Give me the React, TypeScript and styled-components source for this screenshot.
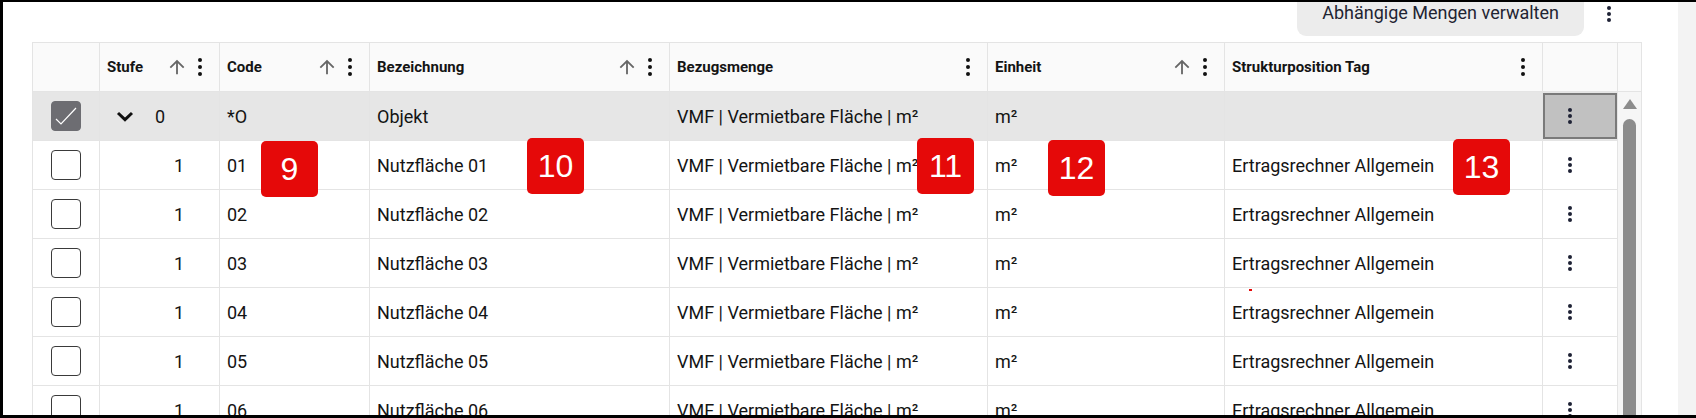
import React from "react";
import styled, { createGlobalStyle } from "styled-components";

const GlobalStyle = createGlobalStyle`
  html, body {
    margin: 0;
    padding: 0;
    background: #ffffff;
  }
  body {
    font-family: Roboto, "Liberation Sans", Arial, sans-serif;
    color: #141414;
  }
`;

// widths of the data columns incl. their right grid line
const GRID = "67px 120px 150px 300px 318px 237px 318px 75px";

type Column = { key: string; title: string; sortable?: boolean };

const COLUMNS: Column[] = [
  { key: "stufe", title: "Stufe", sortable: true },
  { key: "code", title: "Code", sortable: true },
  { key: "bezeichnung", title: "Bezeichnung", sortable: true },
  { key: "bezugsmenge", title: "Bezugsmenge" },
  { key: "einheit", title: "Einheit", sortable: true },
  { key: "tag", title: "Strukturposition Tag" },
];

type Row = {
  level: number;
  code: string;
  name: string;
  ref: string;
  unit: string;
  tag: string;
  expanded?: boolean;
  selected?: boolean;
};

const ROWS: Row[] = [
  {
    level: 0,
    code: "*O",
    name: "Objekt",
    ref: "VMF | Vermietbare Fläche | m²",
    unit: "m²",
    tag: "",
    expanded: true,
    selected: true,
  },
  ...[1, 2, 3, 4, 5, 6].map((i) => ({
    level: 1,
    code: `0${i}`,
    name: `Nutzfläche 0${i}`,
    ref: "VMF | Vermietbare Fläche | m²",
    unit: "m²",
    tag: "Ertragsrechner Allgemein",
  })),
];

const MARKERS = [
  { n: 9, x: 261, y: 141 },
  { n: 10, x: 527, y: 138 },
  { n: 11, x: 917, y: 138 },
  { n: 12, x: 1048, y: 140 },
  { n: 13, x: 1453, y: 139 },
];

const Frame = styled.div`
  position: relative;
  width: 1696px;
  height: 418px;
  box-sizing: border-box;
  border-top: 2px solid #000;
  border-left: 3px solid #000;
  border-bottom: 3px solid #000;
  display: flex;
  overflow: hidden;
  background: #fff;
`;

const Content = styled.div`
  width: 1675px;
  box-sizing: border-box;
  padding-left: 29px;
  display: flex;
  flex-direction: column;
  min-height: 0;
`;

const Gutter = styled.div`
  flex: 1;
  background: #f3f3f3;
`;

const Toolbar = styled.div`
  height: 40px;
  flex-shrink: 0;
  display: flex;
  justify-content: flex-end;
  align-items: flex-start;
  padding-right: 57px;
`;

const ToolbarButton = styled.button`
  height: 34px;
  margin-right: 13px;
  padding: 0 25px;
  border: none;
  border-radius: 0 0 9px 9px;
  background: #ececec;
  color: #1f2433;
  font-family: Roboto, "Liberation Sans", Arial, sans-serif;
  font-size: 18px;
  line-height: 21px;
  display: flex;
  align-items: flex-start;
  white-space: nowrap;
`;

const IconSlot = styled.span<{ $w: number; $h: number }>`
  width: ${({ $w }) => $w}px;
  height: ${({ $h }) => $h}px;
  display: flex;
  align-items: center;
  justify-content: center;
  flex-shrink: 0;
`;

const Table = styled.div`
  width: 1610px;
  flex: 1;
  min-height: 0;
  box-sizing: border-box;
  border: 1px solid #e4e4e4;
  border-bottom: none;
  display: flex;
  flex-direction: column;
  overflow: hidden;
`;

const HeaderRow = styled.div`
  display: grid;
  grid-template-columns: ${GRID} 1fr;
  height: 49px;
  flex-shrink: 0;
  box-sizing: border-box;
  border-bottom: 1px solid #e4e4e4;
  background: #fafafa;
`;

const HeaderCell = styled.div`
  display: flex;
  align-items: center;
  gap: 9px;
  padding: 0 16px 0 7px;
  border-right: 1px solid #e4e4e4;
  font-size: 15px;
  font-weight: 700;
  color: #141414;
  white-space: nowrap;
`;

const HeaderTitle = styled.span`
  flex: 1;
`;

const Body = styled.div`
  display: flex;
  flex: 1;
  min-height: 0;
`;

const Rows = styled.div`
  width: 1585px;
  display: flex;
  flex-direction: column;
`;

const BodyRow = styled.div<{ $selected?: boolean }>`
  display: grid;
  grid-template-columns: ${GRID};
  height: 49px;
  flex-shrink: 0;
  box-sizing: border-box;
  border-bottom: 1px solid #e4e4e4;
  background: ${({ $selected }) => ($selected ? "#e6e6e6" : "#ffffff")};
`;

const Cell = styled.div`
  display: flex;
  align-items: center;
  padding: 0 8px 0 7px;
  border-right: 1px solid #e4e4e4;
  font-size: 18px;
  color: #141414;
  white-space: nowrap;
  overflow: hidden;
`;

const CheckCell = styled(Cell)`
  justify-content: center;
  padding: 0;
`;

const Checkbox = styled.span<{ $checked?: boolean }>`
  width: 30px;
  height: 30px;
  box-sizing: border-box;
  border-radius: 4px;
  border: 1.5px solid ${({ $checked }) => ($checked ? "#6d6d72" : "#3a3a3a")};
  background: ${({ $checked }) => ($checked ? "#6d6d72" : "#ffffff")};
  display: flex;
  align-items: center;
  justify-content: center;
`;

const TreeCell = styled(Cell)<{ $level: number }>`
  padding-left: ${({ $level }) => 7 + $level * 19}px;
`;

const Toggle = styled.span`
  width: 48px;
  height: 20px;
  display: flex;
  align-items: center;
  padding-left: 9px;
  box-sizing: border-box;
  flex-shrink: 0;
`;

const ActionCell = styled.div`
  padding: 1px 0;
  border-right: 1px solid #e4e4e4;
`;

const ActionBox = styled.div<{ $active?: boolean }>`
  height: 100%;
  box-sizing: border-box;
  display: flex;
  align-items: center;
  padding-left: 22px;
  border: 2px solid ${({ $active }) => ($active ? "#7a7a7a" : "transparent")};
  background: ${({ $active }) => ($active ? "#c1c1c1" : "transparent")};
`;

const ScrollTrack = styled.div`
  flex: 1;
  background: #f6f6f6;
  display: flex;
  flex-direction: column;
  align-items: center;
`;

const ScrollArrow = styled.span`
  width: 0;
  height: 0;
  margin-top: 7px;
  border-left: 7.5px solid transparent;
  border-right: 7.5px solid transparent;
  border-bottom: 10px solid #8c8c8c;
`;

const ScrollThumb = styled.span`
  width: 13px;
  flex: 1;
  margin-top: 10px;
  border-radius: 7px 7px 0 0;
  background: #8c8c8c;
`;

const Marker = styled.span`
  position: absolute;
  width: 57px;
  height: 56px;
  border-radius: 5px;
  background: #e50909;
  color: #ffffff;
  font-family: "Liberation Sans", Arial, sans-serif;
  font-size: 32px;
  display: flex;
  align-items: center;
  justify-content: center;
`;

const Speck = styled.span`
  position: absolute;
  width: 3px;
  height: 2px;
  background: #e50909;
`;

const Kebab = ({ gap = 6, color = "#1e2235" }: { gap?: number; color?: string }) => (
  <svg width="6" height={gap * 2 + 6} viewBox={`0 0 6 ${gap * 2 + 6}`}>
    <circle cx="3" cy="3" r="2" fill={color} />
    <circle cx="3" cy={3 + gap} r="2" fill={color} />
    <circle cx="3" cy={3 + gap * 2} r="2" fill={color} />
  </svg>
);

const SortArrow = () => (
  <svg width="22" height="22" viewBox="0 0 24 24">
    <path
      d="M4 12l1.41 1.41L11 7.83V20h2V7.83l5.58 5.59L20 12l-8-8-8 8z"
      fill="#666666"
    />
  </svg>
);

const Chevron = () => (
  <svg width="18" height="11" viewBox="0 0 18 11">
    <path d="M2 2 L9 8.6 L16 2" fill="none" stroke="#111" strokeWidth="3" />
  </svg>
);

const CheckMark = () => (
  <svg width="30" height="30" viewBox="0 0 30 30" style={{ margin: -1.5 }}>
    <path d="M5 18 L10 23 L25 7" fill="none" stroke="#ffffff" strokeWidth="1.2" />
  </svg>
);

const App = () => (
  <>
    <GlobalStyle />
    <Frame>
      <Content>
        <Toolbar>
          <ToolbarButton>Abhängige Mengen verwalten</ToolbarButton>
          <IconSlot $w={24} $h={23}>
            <Kebab gap={6} />
          </IconSlot>
        </Toolbar>
        <Table>
          <HeaderRow>
            <HeaderCell />
            {COLUMNS.map((col) => (
              <HeaderCell key={col.key}>
                <HeaderTitle>{col.title}</HeaderTitle>
                {col.sortable && <SortArrow />}
                <IconSlot $w={6} $h={20}>
                  <Kebab gap={7} color="#111" />
                </IconSlot>
              </HeaderCell>
            ))}
            <HeaderCell />
            <div />
          </HeaderRow>
          <Body>
            <Rows>
              {ROWS.map((row) => (
                <BodyRow key={row.code} $selected={row.selected}>
                  <CheckCell>
                    <Checkbox $checked={row.selected}>{row.selected && <CheckMark />}</Checkbox>
                  </CheckCell>
                  <TreeCell $level={row.level}>
                    <Toggle>{row.expanded && <Chevron />}</Toggle>
                    {row.level}
                  </TreeCell>
                  <Cell>{row.code}</Cell>
                  <Cell>{row.name}</Cell>
                  <Cell>{row.ref}</Cell>
                  <Cell>{row.unit}</Cell>
                  <Cell>{row.tag}</Cell>
                  <ActionCell>
                    <ActionBox $active={row.selected}>
                      <Kebab gap={6} />
                    </ActionBox>
                  </ActionCell>
                </BodyRow>
              ))}
            </Rows>
            <ScrollTrack>
              <ScrollArrow />
              <ScrollThumb />
            </ScrollTrack>
          </Body>
        </Table>
      </Content>
      <Gutter />
      {MARKERS.map((m) => (
        <Marker key={m.n} style={{ left: m.x - 3, top: m.y - 2 }}>
          {m.n}
        </Marker>
      ))}
      <Speck style={{ left: 1246, top: 287 }} />
    </Frame>
  </>
);

export default App;
